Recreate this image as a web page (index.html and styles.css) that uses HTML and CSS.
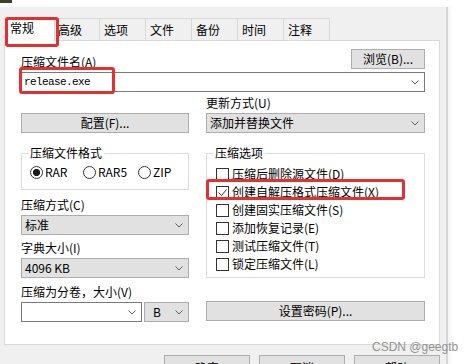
FILE: index.html
```html
<!DOCTYPE html>
<html lang="zh-CN">
<head>
    <meta charset="UTF-8">
    <title>压缩文件名和参数</title>
    <link rel="stylesheet" href="styles.css">
</head>
<body>
    <div class="titlebar"><div class="app-icon"></div></div>
    <div class="dialog">
        <!-- Tabs -->
        <div class="tabs">
            <div class="tab active">常规<span class="mark mark-tab"></span></div>
            <div class="tab">高级</div>
            <div class="tab">选项</div>
            <div class="tab">文件</div>
            <div class="tab">备份</div>
            <div class="tab">时间</div>
            <div class="tab">注释</div>
        </div>

        <!-- General page -->
        <div class="panel">
            <div class="name-row">
                <div class="label name-label">压缩文件名(A)</div>
                <button class="btn browse">浏览(B)...</button>
            </div>
            <div class="combo edit name-box">
                <span class="mono">release.exe</span>
                <svg class="chev" width="8" height="5" viewBox="0 0 8 5"><path d="M0.5 0.5 L4 4 L7.5 0.5" /></svg>
                <span class="mark mark-name"></span>
            </div>

            <div class="cols">
                <div class="col">
                    <button class="btn profile">配置(F)...</button>

                    <fieldset class="group format">
                        <legend>压缩文件格式</legend>
                        <div class="radios">
                            <div class="opt"><span class="radio on"></span>RAR</div>
                            <div class="opt"><span class="radio"></span>RAR5</div>
                            <div class="opt"><span class="radio"></span>ZIP</div>
                        </div>
                    </fieldset>

                    <div class="label method-label">压缩方式(C)</div>
                    <div class="combo">
                        <span>标准</span>
                        <svg class="chev" width="8" height="5" viewBox="0 0 8 5"><path d="M0.5 0.5 L4 4 L7.5 0.5" /></svg>
                    </div>

                    <div class="label dict-label">字典大小(I)</div>
                    <div class="combo">
                        <span>4096 KB</span>
                        <svg class="chev" width="8" height="5" viewBox="0 0 8 5"><path d="M0.5 0.5 L4 4 L7.5 0.5" /></svg>
                    </div>

                    <div class="label split-label">压缩为分卷，大小(V)</div>
                    <div class="split-row">
                        <div class="combo edit split-size">
                            <span></span>
                            <svg class="chev" width="8" height="5" viewBox="0 0 8 5"><path d="M0.5 0.5 L4 4 L7.5 0.5" /></svg>
                        </div>
                        <div class="combo split-unit">
                            <span>B</span>
                            <svg class="chev" width="8" height="5" viewBox="0 0 8 5"><path d="M0.5 0.5 L4 4 L7.5 0.5" /></svg>
                        </div>
                    </div>
                </div>

                <div class="col">
                    <div class="label update-label">更新方式(U)</div>
                    <div class="combo">
                        <span>添加并替换文件</span>
                        <svg class="chev" width="8" height="5" viewBox="0 0 8 5"><path d="M0.5 0.5 L4 4 L7.5 0.5" /></svg>
                    </div>

                    <fieldset class="group options">
                        <legend>压缩选项</legend>
                        <div class="check-row"><span class="check"></span>压缩后删除源文件(D)</div>
                        <div class="check-row">
                            <span class="check"><svg width="11" height="11" viewBox="0 0 11 11"><path d="M1.5 5.5 L4.5 8.5 L9.5 2.5" /></svg></span>创建自解压格式压缩文件(X)
                            <span class="mark mark-sfx"></span>
                        </div>
                        <div class="check-row"><span class="check"></span>创建固实压缩文件(S)</div>
                        <div class="check-row"><span class="check"></span>添加恢复记录(E)</div>
                        <div class="check-row"><span class="check"></span>测试压缩文件(T)</div>
                        <div class="check-row"><span class="check"></span>锁定压缩文件(L)</div>
                    </fieldset>

                    <button class="btn password">设置密码(P)...</button>
                </div>
            </div>
        </div>

        <!-- Dialog buttons -->
        <div class="actions">
            <button class="btn action">确定</button>
            <button class="btn action">取消</button>
            <button class="btn action">帮助</button>
        </div>

        <div class="watermark">CSDN @geegtb</div>
    </div>
</body>
</html>
```

FILE: styles.css
```css
/* General Styles */
body {
    margin: 0;
    height: 364px;
    overflow: hidden;
    background: #fff;
    color: #000;
    font-family: "Noto Sans CJK SC", sans-serif;
    font-size: 12px;
    line-height: 14px;
}

.titlebar {
    height: 7px;
}

.app-icon {
    width: 12px;
    height: 3px;
    background: #3b3f2c;
}

.dialog {
    position: relative;
    width: 448px;
    height: 357px;
    background: #f0f0f0;
    border-right: 2px solid #d6d6d6;
    box-shadow: 2px 0 4px rgba(0, 0, 0, 0.06);
    padding-top: 10px;
    box-sizing: border-box;
}

/* Tabs */
.tabs {
    display: flex;
    align-items: flex-end;
    height: 23px;
    padding-left: 5px;
}

.tab {
    position: relative;
    box-sizing: border-box;
    width: 47px;
    height: 22px;
    padding: 4px 0 0 4px;
    border: 1px solid #d9d9d9;
    border-bottom: none;
    margin-right: -1px;
    background: #f0f0f0;
}

.tab.active {
    width: 50px;
    height: 24px;
    padding-top: 3px;
    margin-bottom: -1px;
    margin-right: -2px;
    background: #fff;
    z-index: 1;
}

/* Red annotation boxes */
.mark {
    position: absolute;
    box-sizing: border-box;
    border: 3px solid #e53030;
    border-radius: 3px;
    pointer-events: none;
}

.mark-tab {
    left: -1px;
    top: -1px;
    width: 54px;
    height: 30px;
}

.mark-name {
    left: -2px;
    top: -6px;
    width: 96px;
    height: 27px;
}

.mark-sfx {
    left: -9px;
    top: -4px;
    width: 199px;
    height: 21px;
}

/* Page panel */
.panel {
    box-sizing: border-box;
    width: 436px;
    height: 305px;
    margin-left: 4px;
    padding: 8px 14px 0 15px;
    background: #fff;
    border: 1px solid #d9d9d9;
}

.name-row {
    display: flex;
    justify-content: space-between;
    align-items: flex-start;
}

.name-label {
    margin: 6px 0 0 1px;
}

.btn {
    box-sizing: border-box;
    height: 20px;
    padding: 0;
    font: inherit;
    color: #000;
    background: #e1e1e1;
    border: 1px solid #adadad;
}

.browse {
    width: 74px;
}

.combo {
    position: relative;
    box-sizing: border-box;
    height: 20px;
    display: flex;
    align-items: center;
    justify-content: space-between;
    padding: 0 5px 0 3px;
    background: #e1e1e1;
    border: 1px solid #adadad;
}

.combo.edit {
    background: #fff;
    border-color: #7a7a7a;
}

.chev path {
    fill: none;
    stroke: #606060;
    stroke-width: 1;
}

.mono {
    font-family: "Liberation Mono", monospace;
    font-size: 11px;
    letter-spacing: -0.6px;
}

.name-box {
    margin-top: 3px;
}

/* Two columns */
.cols {
    display: grid;
    grid-template-columns: 168px 219px;
    justify-content: space-between;
    margin-left: 1px;
}

.col {
    display: flex;
    flex-direction: column;
}

.profile {
    margin-top: 21px;
}

.update-label {
    margin-top: 4px;
}

.update-label + .combo {
    margin-top: 3px;
}

.group {
    margin: 13px 0 0;
    padding: 5px 8px 10px;
    min-width: 0;
    border: 1px solid #dcdcdc;
}

.group legend {
    padding: 0 2px;
    margin-left: -2px;
    line-height: 14px;
}

.group.options {
    padding-bottom: 4px;
}

.radios {
    display: grid;
    grid-template-columns: 53px 55px auto;
    height: 14px;
    align-items: center;
}

.opt {
    display: flex;
    align-items: center;
    gap: 2px;
}

.radio {
    box-sizing: border-box;
    width: 13px;
    height: 13px;
    border: 1px solid #333;
    border-radius: 50%;
    background: #fff;
}

.radio.on {
    background: radial-gradient(circle, #1a1a1a 0 3.3px, #fff 3.9px);
}

.method-label {
    margin-top: 8px;
}

.dict-label {
    margin-top: 6px;
}

.split-label {
    margin-top: 7px;
}

.label + .combo,
.split-row {
    margin-top: 3px;
}

.split-row {
    display: flex;
    justify-content: space-between;
}

.split-size {
    width: 121px;
}

.split-unit {
    width: 45px;
    padding-left: 8px;
}

.check-row {
    position: relative;
    display: flex;
    align-items: center;
    gap: 3px;
    height: 18px;
}

.check {
    box-sizing: border-box;
    width: 13px;
    height: 13px;
    margin-left: 1px;
    border: 1px solid #333;
    background: #fff;
}

.check svg {
    display: block;
}

.check path {
    fill: none;
    stroke: #333;
    stroke-width: 1;
}

.password {
    margin-top: 23px;
}

/* Bottom buttons */
.actions {
    display: flex;
    justify-content: flex-end;
    gap: 9px;
    margin-top: 10px;
    padding-right: 6px;
}

.action {
    width: 86px;
    height: 23px;
    padding-top: 3px;
}

.watermark {
    position: absolute;
    left: 372px;
    top: 333px;
    white-space: nowrap;
    font-family: "Liberation Sans", sans-serif;
    font-size: 12px;
    color: #929292;
}
```
